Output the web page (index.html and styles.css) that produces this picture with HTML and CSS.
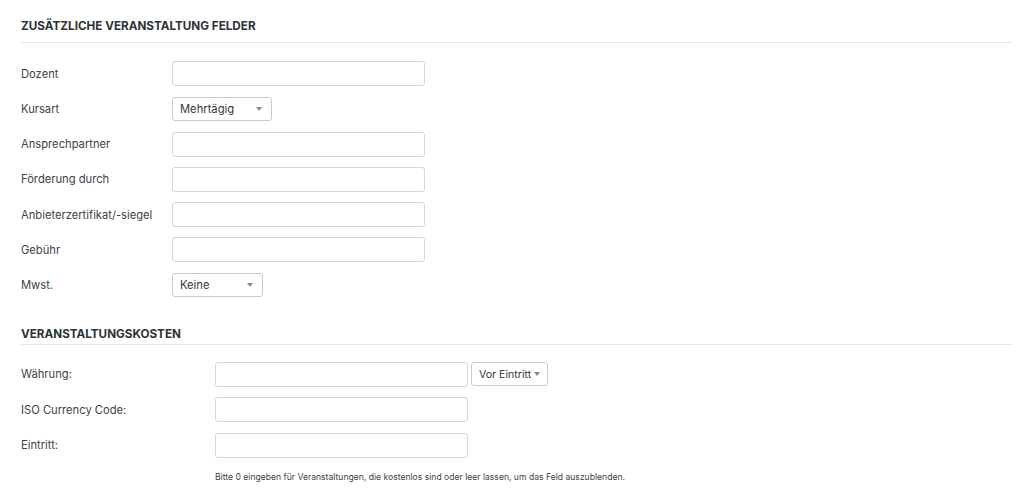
FILE: index.html
```html
<!DOCTYPE html>
<html lang="de">
<head>
<meta charset="utf-8">
<title>Veranstaltung</title>
<link rel="stylesheet" href="styles.css">
</head>
<body>
<div class="page">
  <section class="box box-fields">
    <h2 class="box-title">Zusätzliche Veranstaltung Felder</h2>
    <div class="rows">
      <div class="row"><label class="lbl">Dozent</label><input class="text" type="text"></div>
      <div class="row"><label class="lbl">Kursart</label><div class="select w-kurs"><span>Mehrtägig</span><i class="caret"></i></div></div>
      <div class="row"><label class="lbl">Ansprechpartner</label><input class="text" type="text"></div>
      <div class="row"><label class="lbl">Förderung durch</label><input class="text" type="text"></div>
      <div class="row"><label class="lbl">Anbieterzertifikat/-siegel</label><input class="text" type="text"></div>
      <div class="row"><label class="lbl">Gebühr</label><input class="text" type="text"></div>
      <div class="row"><label class="lbl">Mwst.</label><div class="select w-mwst"><span>Keine</span><i class="caret"></i></div></div>
    </div>
  </section>

  <section class="box box-costs">
    <h2 class="box-title tight">Veranstaltungskosten</h2>
    <div class="rows">
      <div class="row wide"><label class="lbl">Währung:</label><div class="pair"><input class="text" type="text"><div class="select w-pos"><span>Vor Eintritt</span><i class="caret"></i></div></div></div>
      <div class="row wide"><label class="lbl">ISO Currency Code:</label><input class="text" type="text"></div>
      <div class="row wide"><label class="lbl">Eintritt:</label><input class="text" type="text"></div>
    </div>
    <p class="hint">Bitte 0 eingeben für Veranstaltungen, die kostenlos sind oder leer lassen, um das Feld auszublenden.</p>
  </section>
</div>
</body>
</html>
```

FILE: styles.css
```css
html, body {
  margin: 0;
  background: #ffffff;
}

body {
  font-family: Inter, "Liberation Sans", Arial, sans-serif;
  color: #3c434a;
  font-size: 11px;
}

.page {
  padding: 19px 12px 0 21px;
}

.box-title {
  margin: 0;
  font-size: 11.7px;
  line-height: 15px;
  font-weight: 700;
  text-transform: uppercase;
  color: #2c3338;
  padding-bottom: 8px;
  border-bottom: 1px solid #e5e5e7;
}

.box-title.tight {
  padding-bottom: 2px;
}

.box-fields .rows {
  padding-top: 18px;
  display: flex;
  flex-direction: column;
  gap: 10.3px;
}

.box-costs {
  margin-top: 29px;
}

.box-costs .rows {
  padding-top: 17px;
  display: flex;
  flex-direction: column;
  gap: 10.6px;
}

.row {
  display: grid;
  grid-template-columns: 151px auto;
  align-items: center;
  height: 25px;
}

.row.wide {
  grid-template-columns: 194px auto;
}

.lbl {
  font-size: 11.2px;
  color: #3c434a;
}

.text {
  box-sizing: border-box;
  width: 253px;
  height: 25px;
  margin: 0;
  border: 1px solid #d6d6d9;
  border-radius: 3px;
  background: #fff;
  padding: 0 6px;
  font: inherit;
}

.pair {
  display: flex;
  align-items: center;
  gap: 3px;
}

.select {
  box-sizing: border-box;
  height: 24px;
  border: 1px solid #c9c9cc;
  border-radius: 3px;
  background: #fff;
  display: flex;
  align-items: center;
  justify-content: space-between;
  padding: 0 9px 0 7px;
  font-size: 11.2px;
  color: #32373c;
}

.w-kurs { width: 100px; }
.w-mwst { width: 91px; }
.w-pos { width: 77px; padding: 0 7px 0 7px; font-size: 10.6px; }

.caret {
  width: 0;
  height: 0;
  border-left: 3px solid transparent;
  border-right: 3px solid transparent;
  border-top: 4px solid #8a8a8d;
}

.hint {
  margin: 14px 0 0 194px;
  font-size: 8.6px;
  color: #3c434a;
}
```
